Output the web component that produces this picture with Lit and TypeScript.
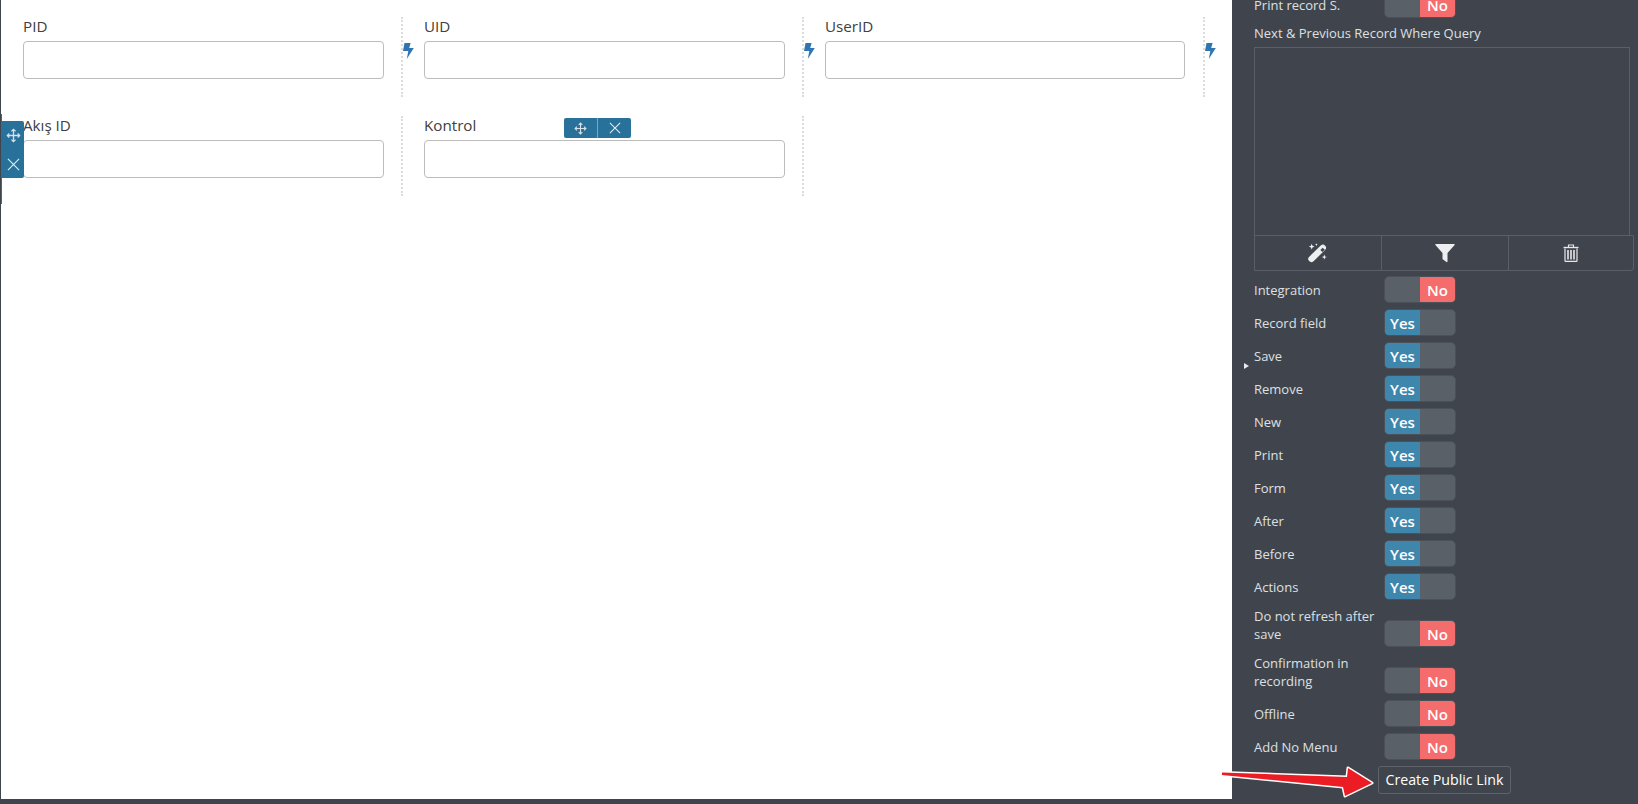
import { LitElement, html, css, svg } from "lit";
import { customElement } from "lit/decorators.js";

const moveIcon = (s: number) => svg`<svg width=${s} height=${s} viewBox="0 0 16 16" fill="none" stroke="#d5e0e8" stroke-width="1.4"><path d="M8 1.5v13M1.5 8h13"/><path d="M5.800 3.600 8 1.400l2.200 2.200M5.800 12.400 8 14.600l2.200-2.200M3.600 5.800 1.400 8l2.200 2.200M12.400 5.800 14.600 8l-2.200 2.200"/></svg>`;
const xIcon = (s: number) => svg`<svg width=${s} height=${s} viewBox="0 0 14 14" fill="none" stroke="#e4edf2" stroke-width="1.2"><path d="M1 1l12 12M13 1 1 13"/></svg>`;
const bolt = svg`<svg width="11" height="16" viewBox="0 0 11 16"><path d="M1.500 0H7.600L6.200 5H10.800L3.800 16l1.500-8H0z" fill="#2e75b2"/></svg>`;
const wand = svg`<svg width="20" height="20" viewBox="0 0 20 20"><path d="M3.400 15.900 14.900 4.800" stroke="#eceeef" stroke-width="6.200" stroke-linecap="round" fill="none"/><path d="m12.300 7 2.200 2 2.300-2.200-2.100-2z" fill="#3f444c"/><path fill="#eceeef" d="m3.700 .8.800 2 2 .8-2 .8-.8 2-.8-2-2-.8 2-.8zM8.400 .2l.4 1.100 1.100.4-1.100.4-.4 1.100-.4-1.100-1.100-.4 1.100-.4zM16.300 11.600l.7 1.800 1.800.7-1.800.7-.7 1.800-.7-1.800-1.800-.7 1.800-.7z"/></svg>`;
const filter = svg`<svg width="20" height="20" viewBox="0 0 20 20"><path d="M.8 1h18.400a.6.6 0 0 1 .4 1L12.500 10v8.600c0 .5-.6.800-1 .5l-3.400-2.600a.8.8 0 0 1-.6-.7V10L.4 2a.6.600 0 0 1 .4-1z" fill="#eceeef"/></svg>`;
const trash = svg`<svg width="16" height="18" viewBox="0 0 16 18" fill="none" stroke="#e6e8ea"><path d="M.5 3.500h15" stroke-width="1.400"/><path d="M5.500 3V1h5v2" stroke-width="1.100"/><path d="M2 4.500v12.300c0 .3.200.6.600.6h10.800c.4 0 .6-.3.600-.6V4.500" stroke-width="1.200"/><path d="M5 6v9.500M8 6v9.500M11 6v9.500" stroke-width="1.600"/></svg>`;

const row1 = ["PID", "UID", "UserID"];
const row2 = ["Akış ID", "Kontrol"];
const toggles: [string, boolean][] = [
  ["Integration", false],
  ["Record field", true],
  ["Save", true],
  ["Remove", true],
  ["New", true],
  ["Print", true],
  ["Form", true],
  ["After", true],
  ["Before", true],
  ["Actions", true],
  ["Do not refresh after save", false],
  ["Confirmation in recording", false],
  ["Offline", false],
  ["Add No Menu", false],
];

@customElement("app-root")
export class AppRoot extends LitElement {
  static styles = css`
    :host {
      display: block;
      position: relative;
      width: 1638px;
      height: 804px;
      overflow: hidden;
      background: #40454d;
      font-family: "Open Sans", "Noto Sans", sans-serif;
    }
    .layout { display: flex; height: 804px; align-items: flex-start; }
    .canvas {
      width: 1231px;
      height: 799px;
      margin-left: 1px;
      background: #fff;
      padding-top: 17px;
      box-sizing: border-box;
      flex: none;
    }
    .grid {
      display: grid;
      grid-template-columns: 402px 401px 401px;
      grid-auto-rows: 80px;
      row-gap: 19px;
    }
    .cell {
      position: relative;
      box-sizing: border-box;
      padding: 0 17px 0 21px;
      border-right: 2px dotted #dcdcdc;
      height: 80px;
    }
    .cell:nth-child(3n + 1) { padding-left: 22px; }
    .cell:nth-child(3n) { padding-right: 18px; }
    .field-label {
      font-size: 15.200px;
      line-height: 18px;
      height: 16px;
      margin-bottom: 8px;
      color: #404040;
      white-space: nowrap;
    }
    .input {
      height: 38px;
      box-sizing: border-box;
      border: 1px solid #bcbcbc;
      border-radius: 4px;
      background: #fff;
    }
    .bolt { position: absolute; right: -13px; top: 26px; line-height: 0; }
    .handle {
      position: absolute;
      left: 1px;
      top: 5px;
      width: 22px;
      height: 57px;
      background: #27719b;
      border-radius: 0 2px 2px 0;
      display: flex;
      flex-direction: column;
      align-items: center;
      justify-content: space-around;
    }
    .handle-line {
      position: absolute;
      left: 0;
      top: -2px;
      width: 1px;
      height: 90px;
      background: #27719b;
    }
    .bar {
      position: absolute;
      left: 161px;
      top: 2px;
      width: 67px;
      height: 20px;
      background: #27719b;
      border-radius: 2px;
      display: flex;
    }
    .bar span { display: flex; align-items: center; justify-content: center; }
    .bar span:first-child { width: 33px; border-right: 1px solid #7ea6bd; }
    .bar span:last-child { flex: 1; }
    .side {
      width: 406px;
      flex: none;
      box-sizing: border-box;
      padding-left: 22px;
      color: #dde0e3;
      font-size: 13px;
      line-height: 18px;
      position: relative;
    }
    .row {
      display: flex;
      align-items: flex-end;
      margin-bottom: 6px;
    }
    .row .lbl { width: 130px; margin: 1px 0 4px; flex: none; }
    .first { margin-top: -9px; }
    .toggle {
      width: 72px;
      height: 27px;
      box-sizing: border-box;
      border-radius: 5px;
      border: 1px solid #4c5159;
      background: #5a6068;
      display: flex;
      overflow: hidden;
      color: #fff;
      font-size: 15px;
      font-weight: 550;
      flex: none;
    }
    .toggle span { width: 35px; display: flex; align-items: center; justify-content: center; }
    .yes { background: #3f86ad; }
    .no { background: #f56c6c; margin-left: auto; }
    .q-label { margin: 2px 0 5px; }
    .textarea {
      width: 376px;
      height: 189px;
      box-sizing: border-box;
      border: 1px solid #5a5f67;
    }
    .tools {
      width: 380px;
      height: 36px;
      margin-top: -1px;
      margin-bottom: 5px;
      box-sizing: border-box;
      border: 1px solid #5a5f67;
      border-radius: 0 0 3px 0;
      display: grid;
      grid-template-columns: 127px 127px 1fr;
    }
    .tools div { display: flex; align-items: center; justify-content: center; }
    .tools div:not(:last-child) { border-right: 1px solid #5a5f67; }
    .link-wrap { padding-left: 124px; }
    .link {
      width: 133px;
      height: 28px;
      box-sizing: border-box;
      border: 1px solid #5f646c;
      border-radius: 3px;
      color: #fff;
      font-size: 14.200px;
      display: flex;
      align-items: center;
      justify-content: center;
      white-space: nowrap;
    }
    .caret {
      position: absolute;
      left: 12px;
      top: 363px;
      width: 0;
      height: 0;
      border-left: 5px solid #e8eaec;
      border-top: 3px solid transparent;
      border-bottom: 3px solid transparent;
    }
    .arrow { position: absolute; left: 1215px; top: 760px; pointer-events: none; }
    .arrow path { paint-order: stroke; }
  `;

  private toggle(on: boolean) {
    return html`<div class="toggle">
      ${on ? html`<span class="yes">Yes</span>` : html`<span class="no">No</span>`}
    </div>`;
  }

  private cell(label: string, extra: unknown) {
    return html`<div class="cell">
      <div class="field-label">${label}</div>
      <div class="input"></div>
      ${extra}
    </div>`;
  }

  render() {
    return html`
      <div class="layout">
        <div class="canvas">
          <div class="grid">
            ${row1.map((l) => this.cell(l, html`<div class="bolt">${bolt}</div>`))}
            ${this.cell(
              row2[0],
              html`<div class="handle-line"></div>
                <div class="handle">${moveIcon(15)}${xIcon(13)}</div>`
            )}
            ${this.cell(
              row2[1],
              html`<div class="bar"><span>${moveIcon(13)}</span><span>${xIcon(12)}</span></div>`
            )}
          </div>
        </div>
        <div class="side">
          <div class="row first"><div class="lbl">Print record S.</div>${this.toggle(false)}</div>
          <div class="q-label">Next &amp; Previous Record Where Query</div>
          <div class="textarea"></div>
          <div class="tools"><div>${wand}</div><div>${filter}</div><div>${trash}</div></div>
          ${toggles.map(
            ([l, on]) => html`<div class="row"><div class="lbl">${l}</div>${this.toggle(on)}</div>`
          )}
          <div class="link-wrap"><div class="link">Create Public Link</div></div>
          <div class="caret"></div>
        </div>
      </div>
      <svg class="arrow" width="170" height="44" viewBox="0 0 170 44">
        <path
          d="M7 12.500 132 17 133 8 157 23 130 36 128 27 7 15z"
          fill="#ec1c24"
          stroke="#fff"
          stroke-width="3"
          stroke-linejoin="round"
        />
      </svg>
    `;
  }
}
